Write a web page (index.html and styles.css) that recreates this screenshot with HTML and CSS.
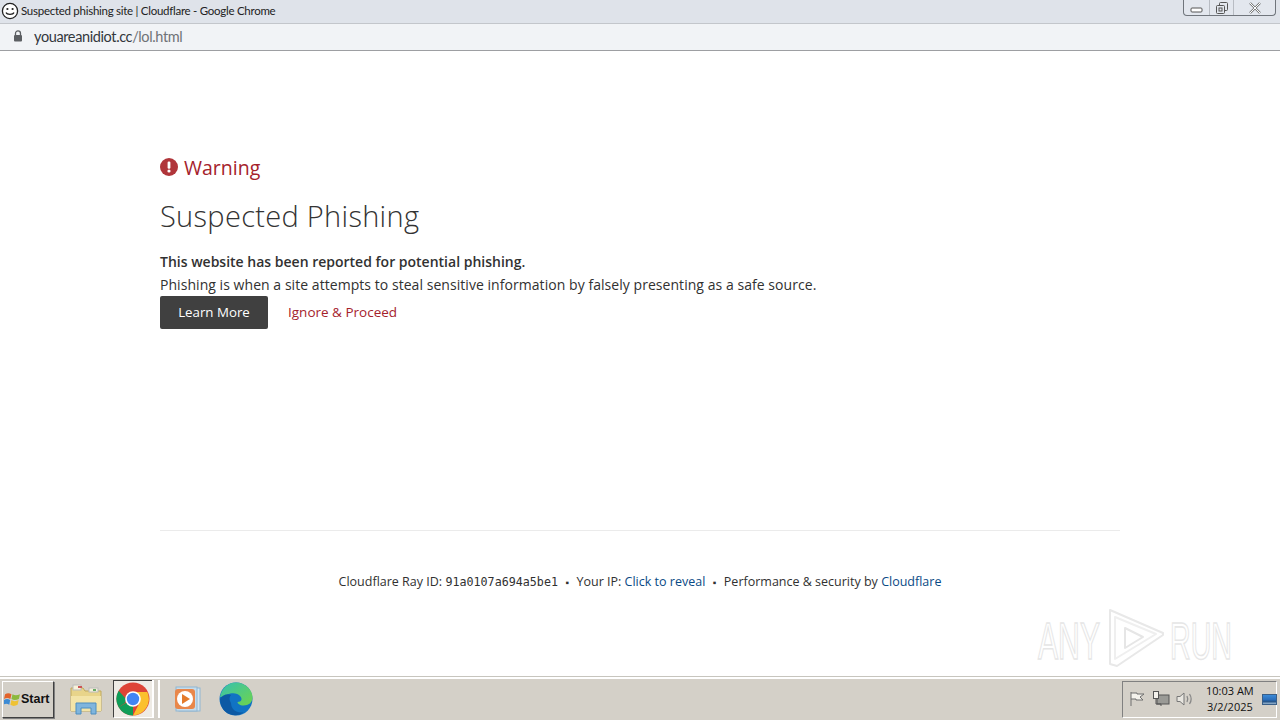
FILE: index.html
```html
<!DOCTYPE html>
<html lang="en">
<head>
<meta charset="utf-8">
<title>Suspected phishing site | Cloudflare</title>
<link rel="stylesheet" href="styles.css">
</head>
<body>
<header class="titlebar">
  <svg class="smiley" width="18" height="18" viewBox="0 0 18 18"><circle cx="9" cy="9" r="7.6" fill="#fff" stroke="#222" stroke-width="1.3"/><circle cx="6.4" cy="7" r="1.1" fill="#222"/><circle cx="11.6" cy="7" r="1.1" fill="#222"/><path d="M5 10.6c1 2.4 7 2.4 8 0" fill="none" stroke="#222" stroke-width="1.2"/></svg>
  <span class="title-text">Suspected phishing site | Cloudflare - Google Chrome</span>
  <div class="win-controls">
    <div class="win-btn win-min"><svg width="14" height="6" viewBox="0 0 14 6"><rect x="1" y="1" width="11" height="4" rx="1" fill="#fff" stroke="#555"/></svg></div>
    <div class="win-btn win-max"><svg width="14" height="14" viewBox="0 0 14 14"><rect x="4.5" y="1.5" width="8" height="8" rx="1" fill="none" stroke="#555"/><rect x="1.5" y="4.5" width="8" height="8" rx="1" fill="#e3e7ee" stroke="#555"/><rect x="4" y="7" width="3" height="3" fill="none" stroke="#555"/></svg></div>
    <div class="win-btn win-close"><svg width="14" height="12" viewBox="0 0 14 12"><path d="M2 1l10 10M12 1L2 11" stroke="#777" stroke-width="2.4"/><path d="M2 1l10 10M12 1L2 11" stroke="#fff" stroke-width="1"/></svg></div>
  </div>
</header>
<div class="addressbar">
  <svg class="lock" width="10" height="12" viewBox="0 0 10 12"><path d="M2.5 5V3.4a2.5 2.5 0 0 1 5 0V5" fill="none" stroke="#5c5f63" stroke-width="1.3"/><rect x="1" y="5" width="8" height="6.5" rx="1" fill="#5c5f63"/></svg>
  <span class="url"><span class="url-host">youareanidiot.cc</span><span class="url-path">/lol.html</span></span>
</div>
<main class="page">
  <div class="warning">
    <svg width="18" height="18" viewBox="0 0 18 18"><circle cx="9" cy="9" r="9" fill="#b0353a"/><rect x="7.6" y="3.5" width="2.8" height="7.2" rx="1.2" fill="#fff"/><circle cx="9" cy="13" r="1.6" fill="#fff"/></svg>
    <span>Warning</span>
  </div>
  <h1 class="heading">Suspected Phishing</h1>
  <p class="lead">This website has been reported for potential phishing.</p>
  <p class="desc">Phishing is when a site attempts to steal sensitive information by falsely presenting as a safe source.</p>
  <div class="actions">
    <a class="btn">Learn More</a>
    <a class="ignore">Ignore &amp; Proceed</a>
  </div>
  <div class="spacer"></div>
  <footer class="footer">
    <span>Cloudflare Ray ID: <span class="ray">91a0107a694a5be1</span></span>
    <span class="dot">▪</span>
    <span>Your IP: <a class="link">Click to reveal</a></span>
    <span class="dot">▪</span>
    <span>Performance &amp; security by <a class="link">Cloudflare</a></span>
  </footer>
</main>
<svg class="watermark" width="200" height="66" viewBox="0 0 200 66">
  <text class="wm-text" transform="translate(1 53) scale(0.58 1)">ANY</text>
  <path d="M73 4L126 27 126 29 80 60 73 58z" fill="#fff" stroke="#e8e8e8" stroke-width="2" stroke-linejoin="round"/>
  <path d="M78 11v42l41-25z" fill="#fff" stroke="#efefef" stroke-width="2" stroke-linejoin="round"/>
  <path d="M88 22v20l18-11z" fill="#fff" stroke="#e6e6e6" stroke-width="2" stroke-linejoin="round"/>
  <text class="wm-text" transform="translate(133 53) scale(0.55 1)">RUN</text>
</svg>
<footer class="taskbar">
  <div class="start">
    <svg width="17" height="16" viewBox="0 0 16 15"><path d="M1 3q3-2 6 0l-1 4.500q-3-2-6 0z" fill="#e2632b"/><path d="M8 3q3 2 7 0l-1 4.500q-4 2-7 0z" fill="#8cb93d"/><path d="M0 8.500q3-2 5.800 0L5 13q-3-2-6 0z" fill="#3d8bd4"/><path d="M7 8.500q3 2 6.800 0l-1 4.500q-3.800 2-6.800 0z" fill="#efc234"/></svg>
    <span>Start</span>
  </div>
  <div class="task-icons">
    <div class="task-item task-folder">
      <svg width="34" height="32" viewBox="0 0 34 32"><path d="M2 5h12l2 3h16v20H2z" fill="#e8d48a" stroke="#c0a95c"/><rect x="4" y="2" width="8" height="5" fill="#f7f2da" stroke="#bbb"/><rect x="9" y="3" width="4" height="2" fill="#c55"/><rect x="20" y="5" width="9" height="4" fill="#f7f2da" stroke="#bbb"/><rect x="24" y="6" width="3" height="2" fill="#6a6"/><path d="M2 13h30v15H2z" fill="#f3e4a8"/><path d="M7 31V20h20v11h-5v-6H12v6z" fill="#7fb5dd" stroke="#4d8ec0"/></svg>
    </div>
    <div class="task-item task-active">
      <svg width="34" height="34" viewBox="0 0 34 34"><circle cx="17" cy="17" r="16.500" fill="#dd4437"/><path d="M17 17L2.700 25.300A16.500 16.500 0 0 0 17 33.500z" fill="#0f9d58"/><path d="M2.700 25.300A16.500 16.500 0 0 1 2.700 8.700L10 17l-1 4z" fill="#0f9d58"/><path d="M17 10h14.300a16.500 16.500 0 0 1-14.300 23.500L24 20z" fill="#fbc02d"/><circle cx="17" cy="17" r="7.800" fill="#fff"/><circle cx="17" cy="17" r="6.200" fill="#4285f4"/></svg>
      <span class="stack"></span>
    </div>
    <div class="task-item task-media">
      <svg width="30" height="28" viewBox="0 0 30 28"><rect x="7" y="3" width="21" height="23" fill="#d5e6f2" stroke="#8fb6d2"/><rect x="4" y="2" width="21" height="24" fill="#c5dcec" stroke="#8fb6d2"/><rect x="3" y="4" width="20" height="20" rx="3" fill="#e9874a"/><circle cx="13" cy="14" r="8" fill="#fff"/><path d="M10 9l8 5-8 5z" fill="#e47b2c"/></svg>
    </div>
    <div class="task-item task-edge">
      <svg width="34" height="34" viewBox="0 0 34 34"><defs><linearGradient id="e1" x1="0" y1="0" x2="1" y2="1"><stop offset="0" stop-color="#35c1b1"/><stop offset="1" stop-color="#6fd44b"/></linearGradient></defs><circle cx="17" cy="17" r="16.500" fill="#1173c4"/><path d="M1 15C3 5 10 .5 17 .5c9 0 16.500 7 16.500 15 0 5-4 8-9 8-4 0-6-2-6-3.500 4 0 5-3 3-5.500-3-4-9-4-13-2-3 1.500-6 3-7.500 2.500z" fill="url(#e1)"/><path d="M12 21c0 7 7 11 13 9-3 3-8 3.500-11.500 3C6 32 1 25 1 17c2-4 8-6 11-4-2 2-2 5 0 8z" fill="#0c59a4"/></svg>
    </div>
  </div>
  <div class="tray">
    <svg class="tray-icon" width="18" height="16" viewBox="0 0 18 16"><path d="M3 1v14M3 2h6v1h7l-4 3 3 3H8V8H3" fill="#f4f2ec" stroke="#6f6f6f"/></svg>
    <svg class="tray-icon" width="18" height="18" viewBox="0 0 18 18"><rect x="5" y="5" width="12" height="9" fill="#9a9a96" stroke="#555"/><rect x="1.500" y="1.500" width="5" height="7" fill="#f4f2ec" stroke="#555"/><path d="M4 8v6h5v2" fill="none" stroke="#555"/></svg>
    <svg class="tray-icon" width="18" height="16" viewBox="0 0 18 16"><path d="M1 5.500h3L8 2v12L4 10.500H1z" fill="#e8e6e0" stroke="#777"/><path d="M11 5c1 2 1 4 0 6M13.500 3c2 3 2 7 0 10" fill="none" stroke="#888" stroke-width="1.300"/></svg>
    <div class="clock"><span>10:03 AM</span><span>3/2/2025</span></div>
    <div class="show-desktop"></div>
  </div>
</footer>
</body>
</html>
```
FILE: styles.css
```css
* { box-sizing: border-box; }
html, body { margin: 0; padding: 0; }
body {
  width: 1280px;
  height: 720px;
  overflow: hidden;
  position: relative;
  display: flex;
  flex-direction: column;
  background: #fff;
  font-family: "Open Sans", "Noto Sans", sans-serif;
  color: #313131;
}
.titlebar {
  height: 24px;
  flex: none;
  display: flex;
  align-items: center;
  padding: 0 0 2px 1px;
  background: #dfe3ea;
  border-bottom: 1px solid #c3c6cb;
}
.smiley { flex: none; }
.title-text {
  margin-left: 2px;
  font-family: "Lato", sans-serif;
  font-size: 11.500px;
  letter-spacing: -0.27px;
  color: #222;
}
.win-controls {
  margin-left: auto;
  margin-right: 4px;
  align-self: flex-start;
  display: flex;
  height: 16px;
  width: 93px;
  border: 1px solid #70757c;
  border-top: 0;
  border-radius: 0 0 4px 4px;
  background: #e3e7ee;
}
.win-btn {
  display: flex;
  align-items: center;
  justify-content: center;
  border-left: 1px solid #b8bcc3;
}
.win-min { width: 25px; border-left: 0; padding-top: 5px; }
.win-max { width: 24px; }
.win-close { flex: 1; }
.addressbar {
  height: 27px;
  flex: none;
  display: flex;
  align-items: center;
  padding: 0 0 2px 13px;
  background: #f1f3f6;
  border-bottom: 1px solid #9d9fa2;
}
.lock { flex: none; }
.url {
  margin-left: 11px;
  font-family: "Lato", sans-serif;
  font-size: 14.500px;
  letter-spacing: -0.38px;
}
.url-host { color: #33373c; }
.url-path { color: #6f7276; }
.page {
  flex: 1;
  min-height: 0;
  display: flex;
  flex-direction: column;
  padding: 104px 160px 0;
}
.warning {
  display: flex;
  align-items: center;
  gap: 6px;
  height: 24px;
  font-size: 19.500px;
  color: #a5222c;
}
.heading {
  margin: 16px 0 0;
  height: 42px;
  line-height: 42px;
  font-size: 29px;
  font-weight: 300;
  letter-spacing: 0.3px;
  color: #333;
}
.lead {
  margin: 13px 0 0;
  height: 23px;
  line-height: 23px;
  font-size: 14px;
  font-weight: 600;
}
.desc {
  margin: 0;
  height: 23px;
  line-height: 23px;
  font-size: 14px;
  letter-spacing: 0.05px;
}
.actions {
  display: flex;
  align-items: center;
  height: 33px;
  gap: 20px;
}
.btn {
  width: 108px;
  height: 33px;
  display: flex;
  align-items: center;
  justify-content: center;
  padding-bottom: 2px;
  background: #404040;
  border-radius: 2px;
  color: #fff;
  font-size: 13.300px;
}
.ignore {
  padding-bottom: 2px;
  font-size: 13.500px;
  color: #a5222c;
}
.spacer { height: 201px; flex: none; }
.footer {
  border-top: 1px solid #ebebeb;
  padding-top: 42px;
  display: flex;
  justify-content: center;
  gap: 7.500px;
  font-size: 12.500px;
  line-height: 18px;
  color: #313131;
}
.dot { font-size: 10px; }
.ray { font-family: "DejaVu Sans Mono", "Liberation Mono", monospace; font-size: 11.700px; }
.link { color: #0a4a85; }
.watermark {
  position: absolute;
  left: 1037px;
  top: 606px;
}
.wm-text {
  font-family: "Liberation Sans", sans-serif;
  font-size: 52px;
  fill: #fff;
  stroke: #e6e6e6;
  stroke-width: 1.500px;
}
.taskbar {
  height: 43px;
  flex: none;
  display: flex;
  align-items: center;
  background: #d4d0c8;
  border-top: 1px solid #fff;
  box-shadow: inset 0 1px 0 #fff, 0 -1px 0 #c7c5be;
}
.start {
  margin-left: 2px;
  width: 52px;
  height: 37px;
  display: flex;
  align-items: center;
  gap: 0;
  padding-left: 1px;
  border: 1px solid;
  border-color: #fff #404040 #404040 #fff;
  box-shadow: 1px 1px 0 #808080;
  font-family: "Liberation Sans", sans-serif;
  font-size: 12.500px;
  font-weight: 700;
  color: #111;
}
.task-icons {
  display: flex;
  align-items: center;
  margin-left: 15px;
}
.task-item {
  height: 38px;
  display: flex;
  align-items: center;
  justify-content: center;
}
.task-folder { width: 34px; margin-right: 10px; }
.task-active {
  position: relative;
  width: 47px;
  justify-content: flex-start;
  padding-left: 2px;
  border: 1px solid;
  border-color: #404040 #fff #fff #404040;
  background: #eeebe5;
  margin-right: 12px;
}
.task-media { width: 30px; margin-right: 17px; }
.task-edge { width: 34px; }
.stack {
  position: absolute;
  right: -1px;
  top: -1px;
  width: 8px;
  height: 38px;
  border-left: 2px solid #fff;
  border-right: 2px solid #fff;
  background: #d4d0c8;
}
.tray {
  margin-left: auto;
  margin-right: 3px;
  width: 155px;
  height: 37px;
  flex: none;
  display: flex;
  align-items: center;
  gap: 6px;
  padding-left: 5px;
  border: 1px solid;
  border-color: #808080 #fff #fff #808080;
}
.tray-icon { flex: none; }
.clock {
  flex: none;
  display: flex;
  flex-direction: column;
  align-items: center;
  margin-left: 6px;
  font-family: "Open Sans", sans-serif;
  font-size: 11px;
  line-height: 16px;
  white-space: nowrap;
  color: #111;
}
.show-desktop {
  flex: none;
  width: 15px;
  height: 11px;
  margin-left: 2px;
  background: linear-gradient(#3b8bd8, #2a6cb8 55%, #1f4f86 70%, #9bb7d0);
  border: 1px solid #3a5f88;
}
```
